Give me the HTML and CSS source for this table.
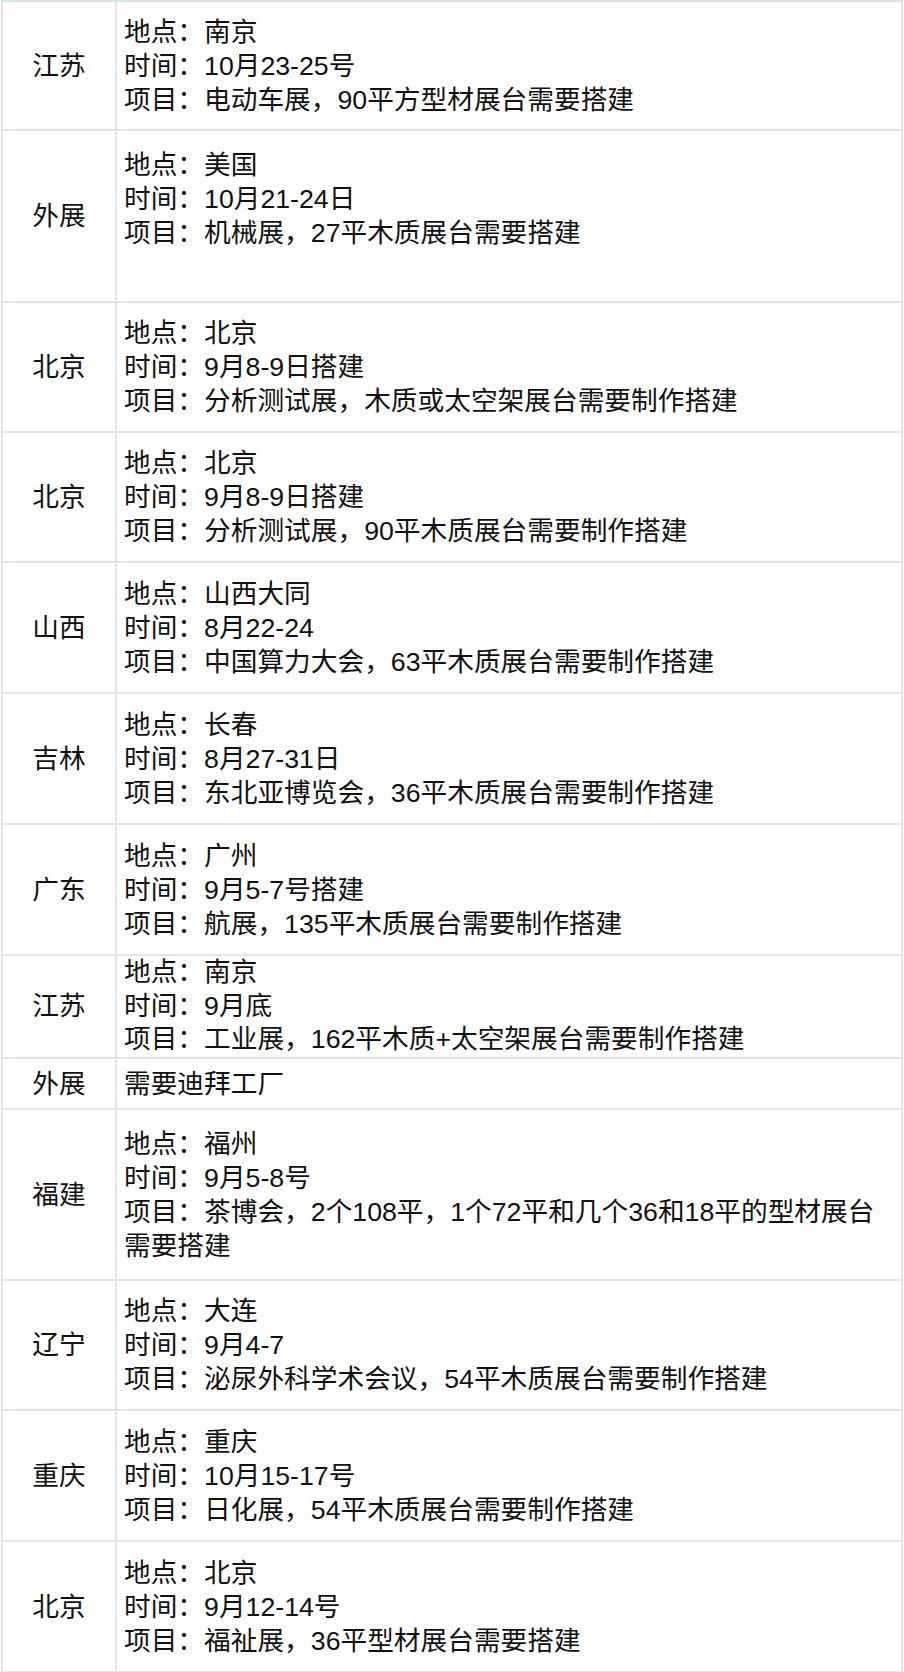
FILE: index.html
```html
<!DOCTYPE html>
<html lang="zh">
<head>
<meta charset="utf-8">
<title>展台搭建需求</title>
<link rel="stylesheet" href="styles.css">
</head>
<body>
<table class="grid">
  <colgroup><col class="c-region"><col class="c-detail"></colgroup>
  <tbody>
    <tr class="first">
      <td class="region">江苏</td>
      <td class="detail">地点：南京<br>时间：10月23-25号<br>项目：电动车展，90平方型材展台需要搭建</td>
    </tr>
    <tr class="tall">
      <td class="region">外展</td>
      <td class="detail">地点：美国<br>时间：10月21-24日<br>项目：机械展，27平木质展台需要搭建<br>&nbsp;</td>
    </tr>
    <tr>
      <td class="region">北京</td>
      <td class="detail">地点：北京<br>时间：9月8-9日搭建<br>项目：分析测试展，木质或太空架展台需要制作搭建</td>
    </tr>
    <tr>
      <td class="region">北京</td>
      <td class="detail">地点：北京<br>时间：9月8-9日搭建<br>项目：分析测试展，90平木质展台需要制作搭建</td>
    </tr>
    <tr class="plus">
      <td class="region">山西</td>
      <td class="detail">地点：山西大同<br>时间：8月22-24<br>项目：中国算力大会，63平木质展台需要制作搭建</td>
    </tr>
    <tr class="plus">
      <td class="region">吉林</td>
      <td class="detail">地点：长春<br>时间：8月27-31日<br>项目：东北亚博览会，36平木质展台需要制作搭建</td>
    </tr>
    <tr class="plus">
      <td class="region">广东</td>
      <td class="detail">地点：广州<br>时间：9月5-7号搭建<br>项目：航展，135平木质展台需要制作搭建</td>
    </tr>
    <tr class="tight">
      <td class="region">江苏</td>
      <td class="detail">地点：南京<br>时间：9月底<br>项目：工业展，162平木质+太空架展台需要制作搭建</td>
    </tr>
    <tr class="single">
      <td class="region">外展</td>
      <td class="detail">需要迪拜工厂</td>
    </tr>
    <tr class="tall2">
      <td class="region">福建</td>
      <td class="detail">地点：福州<br>时间：9月5-8号<br>项目：茶博会，2个108平，1个72平和几个36和18平的型材展台需要搭建</td>
    </tr>
    <tr>
      <td class="region">辽宁</td>
      <td class="detail">地点：大连<br>时间：9月4-7<br>项目：泌尿外科学术会议，54平木质展台需要制作搭建</td>
    </tr>
    <tr class="plus">
      <td class="region">重庆</td>
      <td class="detail">地点：重庆<br>时间：10月15-17号<br>项目：日化展，54平木质展台需要制作搭建</td>
    </tr>
    <tr class="plus">
      <td class="region">北京</td>
      <td class="detail">地点：北京<br>时间：9月12-14号<br>项目：福祉展，36平型材展台需要搭建</td>
    </tr>
  </tbody>
</table>
</body>
</html>
```

FILE: styles.css
```css
html, body {
  margin: 0;
  padding: 0;
  background: #ffffff;
}

body {
  padding: 0 1px 0 1px;
  font-family: "Liberation Sans", "Noto Sans CJK SC", sans-serif;
  font-size: 26.7px;
  line-height: 34px;
  color: #111111;
}

.grid {
  width: 902px;
  border-collapse: collapse;
  table-layout: fixed;
  border: 2px solid #e2e5e6;
}

.c-region {
  width: 114px;
}

.grid td {
  border: 2px solid #e2e5e6;
  vertical-align: middle;
  padding: 13px 6px 13px 7px;
}

.grid tr.first td {
  border-top-color: #d9e3e1;
  padding-top: 13px;
  padding-bottom: 12px;
}

.grid td.region {
  text-align: center;
  padding-left: 0;
  padding-right: 0;
}

.grid td.detail {
  text-align: left;
}

.grid tr.plus td {
  padding-top: 14px;
}

.grid tr.tall td {
  padding-top: 17px;
  padding-bottom: 17px;
}

.grid tr.tall2 td {
  padding-top: 17px;
  padding-bottom: 16px;
}

.grid tr.tight td {
  padding-top: 0;
  padding-bottom: 0;
  line-height: 33.67px;
}

.grid tr.single td {
  padding-top: 8px;
  padding-bottom: 7px;
}
```
